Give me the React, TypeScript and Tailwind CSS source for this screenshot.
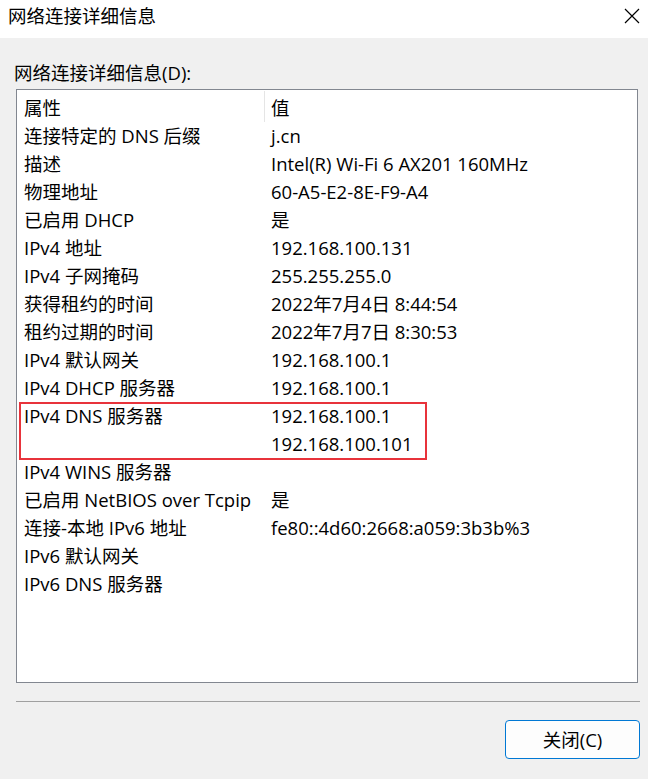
const rows: [string, string][] = [
  ["连接特定的 DNS 后缀", "j.cn"],
  ["描述", "Intel(R) Wi-Fi 6 AX201 160MHz"],
  ["物理地址", "60-A5-E2-8E-F9-A4"],
  ["已启用 DHCP", "是"],
  ["IPv4 地址", "192.168.100.131"],
  ["IPv4 子网掩码", "255.255.255.0"],
  ["获得租约的时间", "2022年7月4日 8:44:54"],
  ["租约过期的时间", "2022年7月7日 8:30:53"],
  ["IPv4 默认网关", "192.168.100.1"],
  ["IPv4 DHCP 服务器", "192.168.100.1"],
  ["IPv4 DNS 服务器", "192.168.100.1"],
  ["", "192.168.100.101"],
  ["IPv4 WINS 服务器", ""],
  ["已启用 NetBIOS over Tcpip", "是"],
  ["连接-本地 IPv6 地址", "fe80::4d60:2668:a059:3b3b%3"],
  ["IPv6 默认网关", ""],
  ["IPv6 DNS 服务器", ""],
];

export default function App() {
  return (
    <div
      className="w-[648px] h-[779px] flex flex-col bg-white text-[18.5px] text-black overflow-hidden"
      style={{ fontFamily: '"Open Sans", "Noto Sans CJK SC", sans-serif' }}
    >
      {/* Title bar */}
      <div className="h-[38px] flex items-center justify-between pl-[8px] pr-[8px] bg-white">
        <span className="leading-none -mt-[6px]">网络连接详细信息</span>
        <svg width="16" height="16" viewBox="0 0 16 16" className="-mt-[6px]">
          <path d="M1 1L15 15M15 1L1 15" stroke="#000" strokeWidth="1.2" />
        </svg>
      </div>

      {/* Body */}
      <div className="flex-1 bg-[#f0f0f0] pt-[22px] pl-[16px] pr-[8px] flex flex-col">
        <div className="leading-[25px] -ml-[2px]">网络连接详细信息(D):</div>

        <div className="relative mt-[4px] mr-[2px] h-[594px] border border-[#828790] bg-white pt-[1px]">
          <div className="flex h-[31px] items-center">
            <div className="w-[248px] h-full pl-[7px] pt-[2px] flex items-center border-r border-[#e5e5e5]">属性</div>
            <div className="pl-[6px] pt-[2px]">值</div>
          </div>
          {rows.map(([k, v], i) => (
            <div key={i} className="flex h-[28px] items-center whitespace-nowrap">
              <div className="w-[248px] pl-[7px]">{k}</div>
              <div className="pl-[6px]">{v}</div>
            </div>
          ))}
          <div className="absolute left-[2px] top-[312px] w-[408px] h-[58px] border-2 border-[#e8333b]" />
        </div>

        <div className="mt-[18px] h-px bg-[#a0a0a0]" />

        <div className="flex justify-end mt-[18px]">
          <button className="w-[135px] h-[39px] rounded-[4px] border border-[#0078d4] bg-[#fdfdfd] flex items-center justify-center">
            关闭(C)
          </button>
        </div>
      </div>
    </div>
  );
}
